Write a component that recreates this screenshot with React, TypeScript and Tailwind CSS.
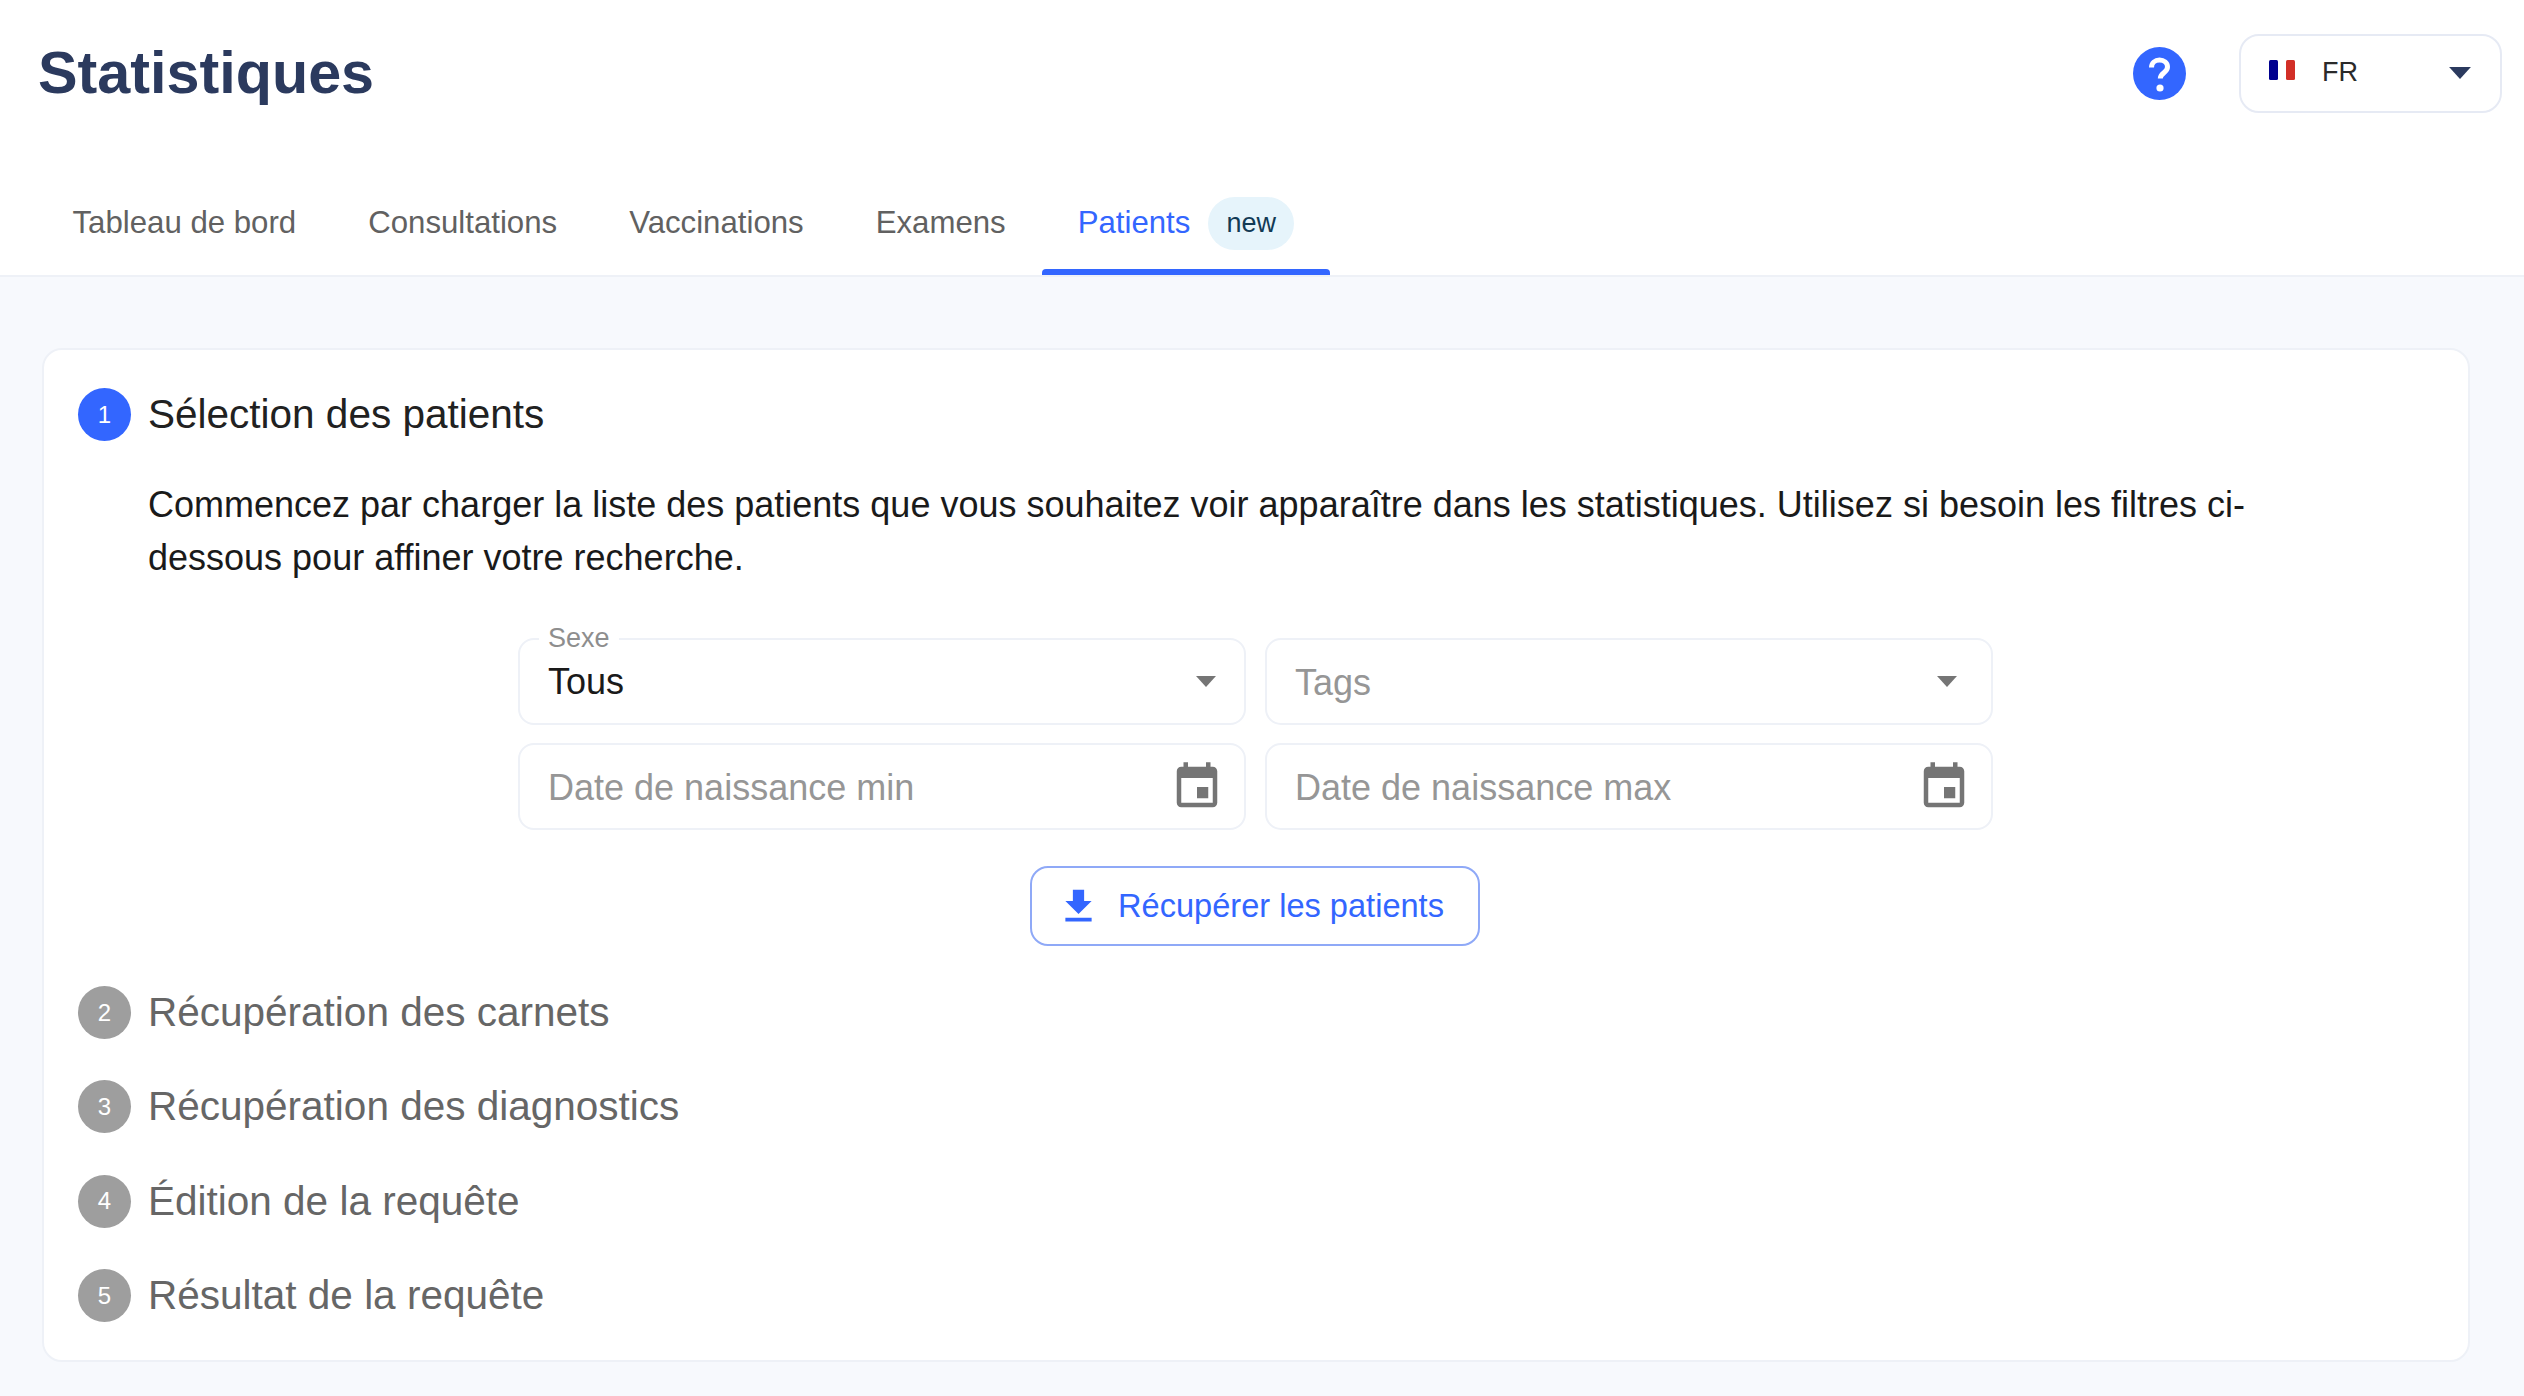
import type { ReactNode } from "react";

const FONT = "font-['Liberation_Sans',Arial,sans-serif]";

const tabs = ["Tableau de bord", "Consultations", "Vaccinations", "Examens"];

const laterSteps = [
  { n: 2, label: "Récupération des carnets" },
  { n: 3, label: "Récupération des diagnostics" },
  { n: 4, label: "Édition de la requête" },
  { n: 5, label: "Résultat de la requête" },
];

function Caret({ className }: { className: string }) {
  return (
    <svg viewBox="0 0 20 11" className={className} fill="currentColor">
      <path d="M0 0h20L10 11z" />
    </svg>
  );
}

function CalendarIcon() {
  return (
    <svg viewBox="0 0 24 24" className="h-[54px] w-[54px] text-[#757575]" fill="currentColor">
      <path d="M17 12h-5v5h5v-5zM16 1v2H8V1H6v2H5c-1.11 0-1.99.9-1.99 2L3 19c0 1.1.89 2 2 2h14c1.1 0 2-.9 2-2V5c0-1.1-.9-2-2-2h-1V1h-2zm3 18H5V8h14v11z" />
    </svg>
  );
}

function Field({ children }: { children: ReactNode }) {
  return (
    <div className="relative flex h-[87px] items-center justify-between rounded-[16px] border-2 border-[#eef1f7] bg-white pl-[28px] pr-[20px]">
      {children}
    </div>
  );
}

function StepBadge({ n, active }: { n: number; active?: boolean }) {
  return (
    <span
      className={`flex h-[53px] w-[53px] shrink-0 items-center justify-center rounded-full text-[24px] text-white ${
        active ? "bg-[#3366ff]" : "bg-[#9e9e9e]"
      }`}
    >
      {n}
    </span>
  );
}

export default function App() {
  return (
    <div className={`${FONT} flex h-[1396px] flex-col overflow-hidden bg-[#f7f9fd]`}>
      {/* Header */}
      <header className="h-[277px] shrink-0 border-b-2 border-[#eef1f7] bg-white">
        <div className="flex h-[146px] items-center justify-between pl-[38px] pr-[22px]">
          <h1 className="text-[59.3px] font-bold leading-none text-[#2b3a5e]">Statistiques</h1>
          <div className="flex items-center gap-[53px]">
            <svg viewBox="0 0 53 53" className="h-[53px] w-[53px]">
              <circle cx="26.5" cy="26.5" r="26.5" fill="#3366ff" />
              <path
                d="M18.5 20.5c0-4.6 3.6-7.5 8-7.5s8 2.8 8 7c0 5.6-7.2 5.8-7.2 11.5"
                fill="none"
                stroke="#fff"
                strokeWidth="5"
              />
              <circle cx="27" cy="41" r="3.6" fill="#fff" />
            </svg>
            <div className="flex h-[79px] w-[263px] items-center rounded-[20px] border-2 border-[#e6eaf4] bg-white pl-[28px] pr-[29px]">
              <svg viewBox="0 0 26 20" className="mb-[6px] h-[20px] w-[26px]">
                <rect width="9" height="20" rx="1.5" fill="#00008f" />
                <rect x="9" width="8" height="20" fill="#fff" />
                <rect x="17" width="9" height="20" rx="1.5" fill="#d22f27" />
              </svg>
              <span className="mb-[2px] ml-[27px] text-[27px] text-[#2a2a2a]">FR</span>
              <Caret className="ml-auto h-[12px] w-[22px] text-[#2b3a5e]" />
            </div>
          </div>
        </div>
        <nav className="flex h-[129px] items-stretch pl-[36.5px] pt-[25px]">
          {tabs.map((t) => (
            <a key={t} className="flex items-center px-[36px] text-[31.2px] text-[#616161]">
              {t}
            </a>
          ))}
          <a className="relative flex items-center px-[36px] text-[31.2px] text-[#3366ff]">
            Patients
            <span className="ml-[18px] rounded-full bg-[#e6f4fb] px-[18px] py-[9px] text-[27px] leading-[35px] text-[#123a55]">
              new
            </span>
            <span className="absolute inset-x-0 bottom-0 h-[6px] rounded-t-[4px] bg-[#3366ff]" />
          </a>
        </nav>
      </header>

      {/* Card */}
      <main className="px-[42px] pt-[71px]">
        <section className="w-[2428px] rounded-[20px] border-2 border-[#eef1f7] bg-white px-[34px] pb-[38px] pt-[38px]">
          <div className="flex items-center gap-[17px]">
            <StepBadge n={1} active />
            <h2 className="text-[40.5px] leading-[53px] text-[#212121]">Sélection des patients</h2>
          </div>
          <p className="ml-[70px] mt-[37px] w-[2150px] text-[36px] leading-[53px] text-[#1a1a1a]">
            Commencez par charger la liste des patients que vous souhaitez voir apparaître dans les statistiques.
            Utilisez si besoin les filtres ci-dessous pour affiner votre recherche.
          </p>

          <div className="ml-[440px] mt-[54px] grid w-[1475px] grid-cols-2 gap-x-[19px] gap-y-[18px]">
            <Field>
              <span className="absolute left-[19px] top-[-15px] bg-white px-[9px] text-[27px] leading-[26px] text-[#8e8e8e]">
                Sexe
              </span>
              <span className="text-[36px] text-[#1a1a1a]">Tous</span>
              <Caret className="mr-[8px] h-[11px] w-[20px] text-[#757575]" />
            </Field>
            <Field>
              <span className="mt-[2px] text-[36px] text-[#969696]">Tags</span>
              <Caret className="mr-[14px] h-[11px] w-[20px] text-[#757575]" />
            </Field>
            <Field>
              <span className="mt-[2px] text-[36px] text-[#969696]">Date de naissance min</span>
              <CalendarIcon />
            </Field>
            <Field>
              <span className="mt-[2px] text-[36px] text-[#969696]">Date de naissance max</span>
              <CalendarIcon />
            </Field>
          </div>

          <div className="ml-[952px] mt-[36px]">
            <button className="flex h-[80px] w-[450px] items-center rounded-[18px] border-2 border-[#8fa9f7] bg-white pl-[24px] text-[32.6px] text-[#3366ff]">
              <svg viewBox="0 0 24 24" className="h-[45px] w-[45px]" fill="currentColor">
                <path d="M19 9h-4V3H9v6H5l7 7 7-7zM5 18v2h14v-2H5z" />
              </svg>
              <span className="ml-[17px]">Récupérer les patients</span>
            </button>
          </div>

          <ul className="mt-[40px] flex flex-col gap-[41.4px]">
            {laterSteps.map((s) => (
              <li key={s.n} className="flex items-center gap-[17px]">
                <StepBadge n={s.n} />
                <span className="text-[40.5px] leading-[53px] text-[#666666]">{s.label}</span>
              </li>
            ))}
          </ul>
        </section>
      </main>
    </div>
  );
}
